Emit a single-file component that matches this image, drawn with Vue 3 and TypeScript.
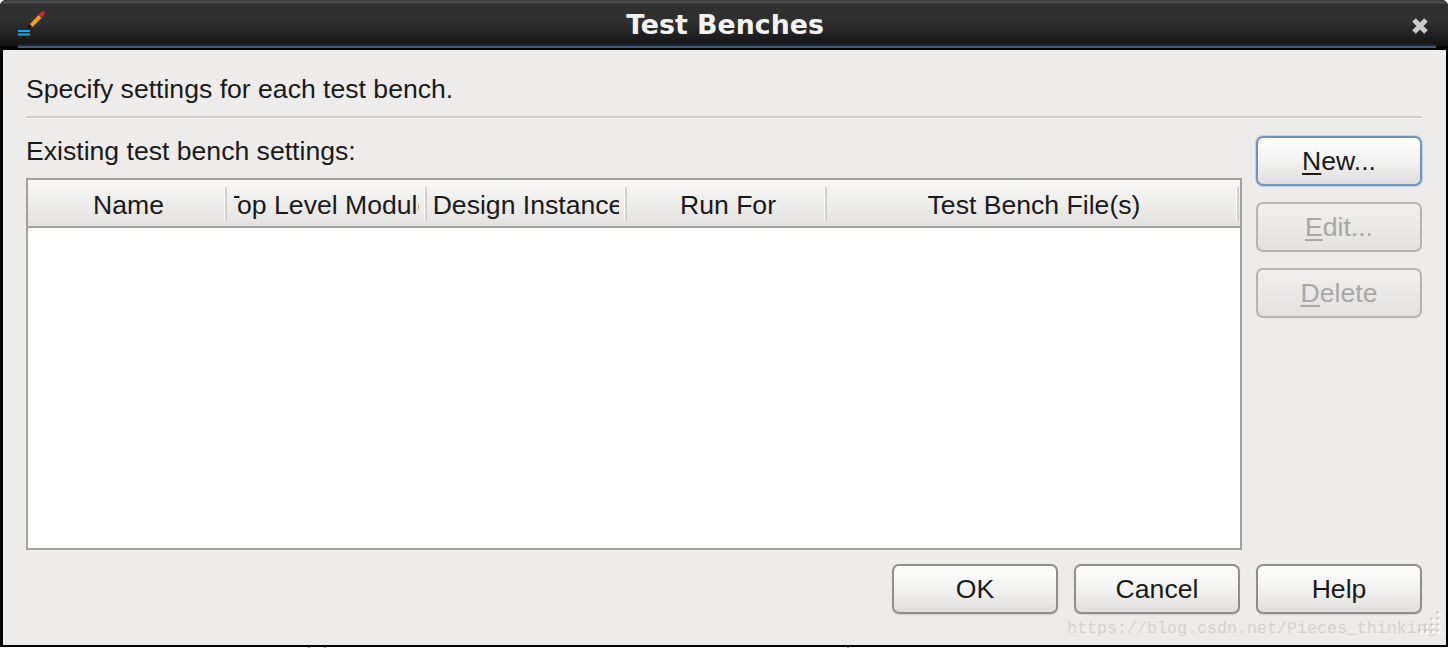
<script setup lang="ts">
interface Col { label: string; width: number }
const columns: Col[] = [
  { label: 'Name', width: 199 },
  { label: 'Top Level Module', width: 200 },
  { label: 'Design Instance', width: 200 },
  { label: 'Run For', width: 200 },
  { label: 'Test Bench File(s)', width: 412 },
]
const grip: number[][] = []
for (let row = 0; row < 4; row++) {
  for (let col = 3 - row; col < 4; col++) grip.push([col * 6, row * 6])
}
const marks: number[] = [308, 324, 847]
</script>

<template>
  <div class="screen">
    <div class="window">
      <header class="titlebar">
        <svg class="app-icon" width="30" height="30" viewBox="16 8 30 30" aria-hidden="true">
          <path d="M27.5 28.5 L28.5 25 L31 27 Z" fill="#120c04" />
          <path d="M30 24 L38.5 15 L41.5 18 L32.5 27 Z" fill="#efa015" />
          <path d="M38.5 14.5 L41 12 L44.5 11 L44.5 14.5 L42 17.5 Z" fill="#d5202c" />
          <rect x="18" y="30" width="12" height="2" fill="#18a8f0" />
          <rect x="18" y="33.5" width="12" height="2" fill="#18a8f0" />
        </svg>
        <span class="title">Test Benches</span>
        <svg class="close" width="18" height="18" viewBox="0 0 18 18" aria-hidden="true">
          <path d="M3 3 L15 15 M15 3 L3 15" stroke="#cbcbcb" stroke-width="5" />
        </svg>
      </header>
      <main class="body">
        <p class="intro">Specify settings for each test bench.</p>
        <div class="rule"></div>
        <div class="content">
          <section class="left">
            <div class="label">Existing test bench settings:</div>
            <div class="table">
              <div class="thead">
                <div v-for="c in columns" :key="c.label" class="th" :style="{ width: c.width + 'px' }">
                  <div class="th-clip"><span class="th-text">{{ c.label }}</span></div>
                </div>
              </div>
              <div class="tbody"></div>
            </div>
          </section>
          <aside class="side">
            <button class="btn focus"><u>N</u>ew...</button>
            <button class="btn off" disabled><u>E</u>dit...</button>
            <button class="btn off" disabled><u>D</u>elete</button>
          </aside>
        </div>
        <footer class="actions">
          <button class="btn">OK</button>
          <button class="btn">Cancel</button>
          <button class="btn">Help</button>
        </footer>
        <div class="watermark">https://blog.csdn.net/Pieces_thinking</div>
        <div class="grip">
          <i v-for="(g, i) in grip" :key="i" :style="{ left: g[0] + 'px', top: g[1] + 'px' }"></i>
        </div>
      </main>
    </div>
    <div class="below">
      <i v-for="m in marks" :key="m" :style="{ left: m + 'px' }"></i>
    </div>
  </div>
</template>

<style>
html, body { margin: 0; background: #fff; overflow: hidden; }
</style>

<style scoped>
.screen {
  width: 1448px;
  height: 648px;
  background: #fff;
  overflow: hidden;
  font-family: "Liberation Sans", Arial, sans-serif;
  color: #1a1a1a;
}
.window {
  width: 1448px;
  height: 646.5px;
  box-sizing: border-box;
  background: #000;
  border-radius: 6px 6px 0 0;
  display: flex;
  flex-direction: column;
  border-bottom: 2.5px solid #000;
  overflow: hidden;
}
.titlebar {
  height: 50px;
  flex: none;
  position: relative;
  display: flex;
  align-items: center;
  justify-content: center;
  box-sizing: border-box;
  background: linear-gradient(#2a2a2a 0, #4c4c4c 1px, #4a4a4a 3px, #303030 4px, #2f2f2f 22px, #161616 44px);
  border-bottom: 4px solid #000;
}
.titlebar::after {
  content: "";
  position: absolute;
  left: 18px;
  right: 12px;
  bottom: -2px;
  height: 4px;
  background: linear-gradient(#1d2530 50%, #465a76 50%);
}
.app-icon { position: absolute; left: 16px; top: 8px; }
.title {
  font-family: "DejaVu Sans", sans-serif;
  font-weight: 700;
  font-size: 26.8px;
  color: #f2f2f2;
  position: relative;
  top: 1px;
  left: 1px;
}
.close { position: absolute; left: 1411px; top: 17px; }
.body {
  flex: 1;
  position: relative;
  margin: 0 2px 0 3px;
  background: #edecea;
  padding: 0 24px 0 23px;
  display: flex;
  flex-direction: column;
  min-height: 0;
}
.intro {
  margin: 0;
  font-size: 26.6px;
  line-height: 30px;
  padding-top: 24px;
  height: 66px;
  box-sizing: border-box;
}
.rule {
  height: 2px;
  background: #cdccca;
  border-bottom: 1px solid #f8f8f7;
  flex: none;
}
.content {
  display: flex;
  gap: 14px;
  flex: none;
  height: 431px;
}
.left { width: 1216px; flex: none; }
.label {
  font-size: 26.6px;
  line-height: 30px;
  padding-top: 17px;
  height: 59px;
  box-sizing: border-box;
}
.table {
  height: 372px;
  box-sizing: border-box;
  border: 2px solid #a3a19e;
  background: #fff;
  display: flex;
  flex-direction: column;
}
.thead {
  height: 48px;
  flex: none;
  display: flex;
  box-sizing: border-box;
  border-bottom: 2px solid #a3a19e;
  background: linear-gradient(#f8f8f7, #e3e2e0);
  padding: 7px 0 6px;
}
.th {
  flex: none;
  box-sizing: border-box;
  border-right: 2px solid #d0cfcd;
  padding: 0 6px 0 7px;
  font-size: 26.6px;
  line-height: 36px;
  box-shadow: inset -1px 0 0 #fff;
}
.th-clip {
  display: flex;
  justify-content: center;
  overflow: hidden;
  height: 100%;
}
.th-text { white-space: nowrap; flex: none; position: relative; left: 1.5px; }
.tbody { flex: 1; }
.side {
  width: 166px;
  flex: none;
  padding-top: 17px;
  display: flex;
  flex-direction: column;
  gap: 16px;
}
.btn {
  width: 166px;
  height: 50px;
  box-sizing: border-box;
  border: 2px solid #8f8e8c;
  border-radius: 7px;
  background: linear-gradient(#fdfdfd, #f4f4f3 45%, #dfdedc);
  font: 26.6px "Liberation Sans", Arial, sans-serif;
  color: #1a1a1a;
  padding: 0;
  box-shadow: 0 1px 1px #d4d3d1;
}
.btn u { text-underline-offset: 3px; text-decoration-thickness: 2px; }
.btn.focus {
  border-color: #6e93bd;
  box-shadow: 0 0 0 1px #c4d3e3;
}
.btn.off {
  border-color: #b5b4b2;
  background: linear-gradient(#f1f0ef, #e3e2e0);
  color: #a8a7a5;
  box-shadow: none;
}
.actions {
  display: flex;
  justify-content: flex-end;
  gap: 16px;
  padding-top: 14px;
}
.watermark {
  position: absolute;
  left: 1064px;
  top: 569px;
  font-family: "Liberation Mono", monospace;
  font-size: 16.67px;
  line-height: 20px;
  color: #d3d2d0;
  white-space: nowrap;
}
.grip { position: absolute; left: 1417px; top: 563px; width: 22px; height: 22px; }
.grip i { position: absolute; width: 3px; height: 3px; background: #f8f8f7; box-shadow: -2px -2px 0 -0.5px #bdbcba; }
.below { position: relative; height: 2px; }
.below i { position: absolute; top: 0; width: 2px; height: 2px; background: #9a9a9a; }
</style>
